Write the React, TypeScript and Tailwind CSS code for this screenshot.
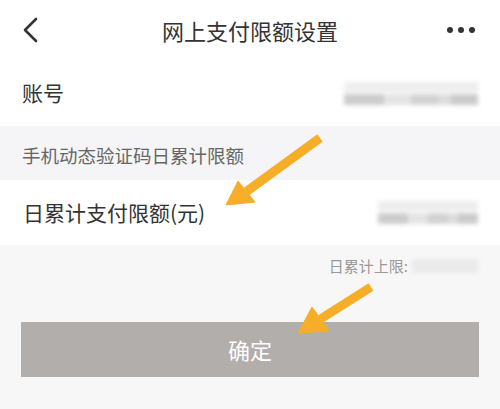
const font = { fontFamily: '"Noto Sans CJK SC", "Noto Sans", sans-serif' };

const Blurred = ({ w }: { w: number }) => (
  <div className="flex flex-col gap-[2px] blur-[2px]" style={{ width: w }}>
    <div className="h-[10px] w-full bg-[#ededed]" />
    <div className="flex h-[11px] w-full">
      <div className="flex-[3] bg-[#cccccc]" />
      <div className="flex-[2] bg-[#e4e4e4]" />
      <div className="flex-[2] bg-[#d2d2d2]" />
      <div className="flex-[1] bg-[#dddddd]" />
      <div className="flex-[2] bg-[#cbcbcb]" />
    </div>
  </div>
);

const Arrow = ({ from, tip, c1, c2 }: { from: [number, number]; tip: [number, number]; c1: [number, number]; c2: [number, number] }) => {
  const mid: [number, number] = [(c1[0] + c2[0]) / 2, (c1[1] + c2[1]) / 2];
  return (
    <g fill="#f6ae29" stroke="#f6ae29">
      <line x1={from[0]} y1={from[1]} x2={mid[0]} y2={mid[1]} strokeWidth={9} />
      <polygon points={`${tip[0]},${tip[1]} ${c1[0]},${c1[1]} ${c2[0]},${c2[1]}`} strokeWidth={1} strokeLinejoin="round" />
    </g>
  );
};

export default function App() {
  return (
    <div className="relative flex h-[409px] w-[500px] flex-col overflow-hidden bg-[#f7f7f7] text-[#333]" style={font}>
      <header className="grid h-[60px] grid-cols-[1fr_auto_1fr] items-center bg-white px-[20px]">
        <svg width={18} height={26} viewBox="0 0 18 26" className="ml-[2px]">
          <polyline points="14,2 3,13 14,24" fill="none" stroke="#333" strokeWidth={2.6} strokeLinecap="round" strokeLinejoin="round" />
        </svg>
        <h1 className="text-[22px] leading-none">网上支付限额设置</h1>
        <div className="flex justify-end gap-[5px] pr-[5px]">
          <span className="h-[6px] w-[6px] rounded-full bg-[#333]" />
          <span className="h-[6px] w-[6px] rounded-full bg-[#333]" />
          <span className="h-[6px] w-[6px] rounded-full bg-[#333]" />
        </div>
      </header>
      <div className="flex h-[66px] items-center justify-between bg-white pl-[22px] pr-[22px]">
        <span className="text-[21px]">账号</span>
        <Blurred w={134} />
      </div>
      <div className="flex h-[54px] items-end bg-[#f5f5f7] pb-[10px] pl-[22px]">
        <span className="text-[18.5px] text-[#666]">手机动态验证码日累计限额</span>
      </div>
      <div className="flex h-[65px] items-center justify-between bg-white pl-[23px] pr-[22px]">
        <span className="text-[21px]">日累计支付限额(元)</span>
        <Blurred w={100} />
      </div>
      <div className="flex items-center justify-end gap-[4px] pr-[22px] pt-[10px]">
        <span className="text-[15px] text-[#999]">日累计上限:</span>
        <div className="h-[14px] w-[66px] bg-[#eaeaea] blur-[2px]" />
      </div>
      <button className="mx-[21px] mt-[44px] flex h-[55px] items-center justify-center bg-[#b1aeac] text-[22px] text-white">
        确定
      </button>
      <svg className="pointer-events-none absolute inset-0" width={500} height={409}>
        <Arrow from={[320, 138]} tip={[226, 205]} c1={[238, 181]} c2={[255, 202]} />
        <Arrow from={[371, 287]} tip={[298, 333]} c1={[312, 307]} c2={[329, 331]} />
      </svg>
    </div>
  );
}
